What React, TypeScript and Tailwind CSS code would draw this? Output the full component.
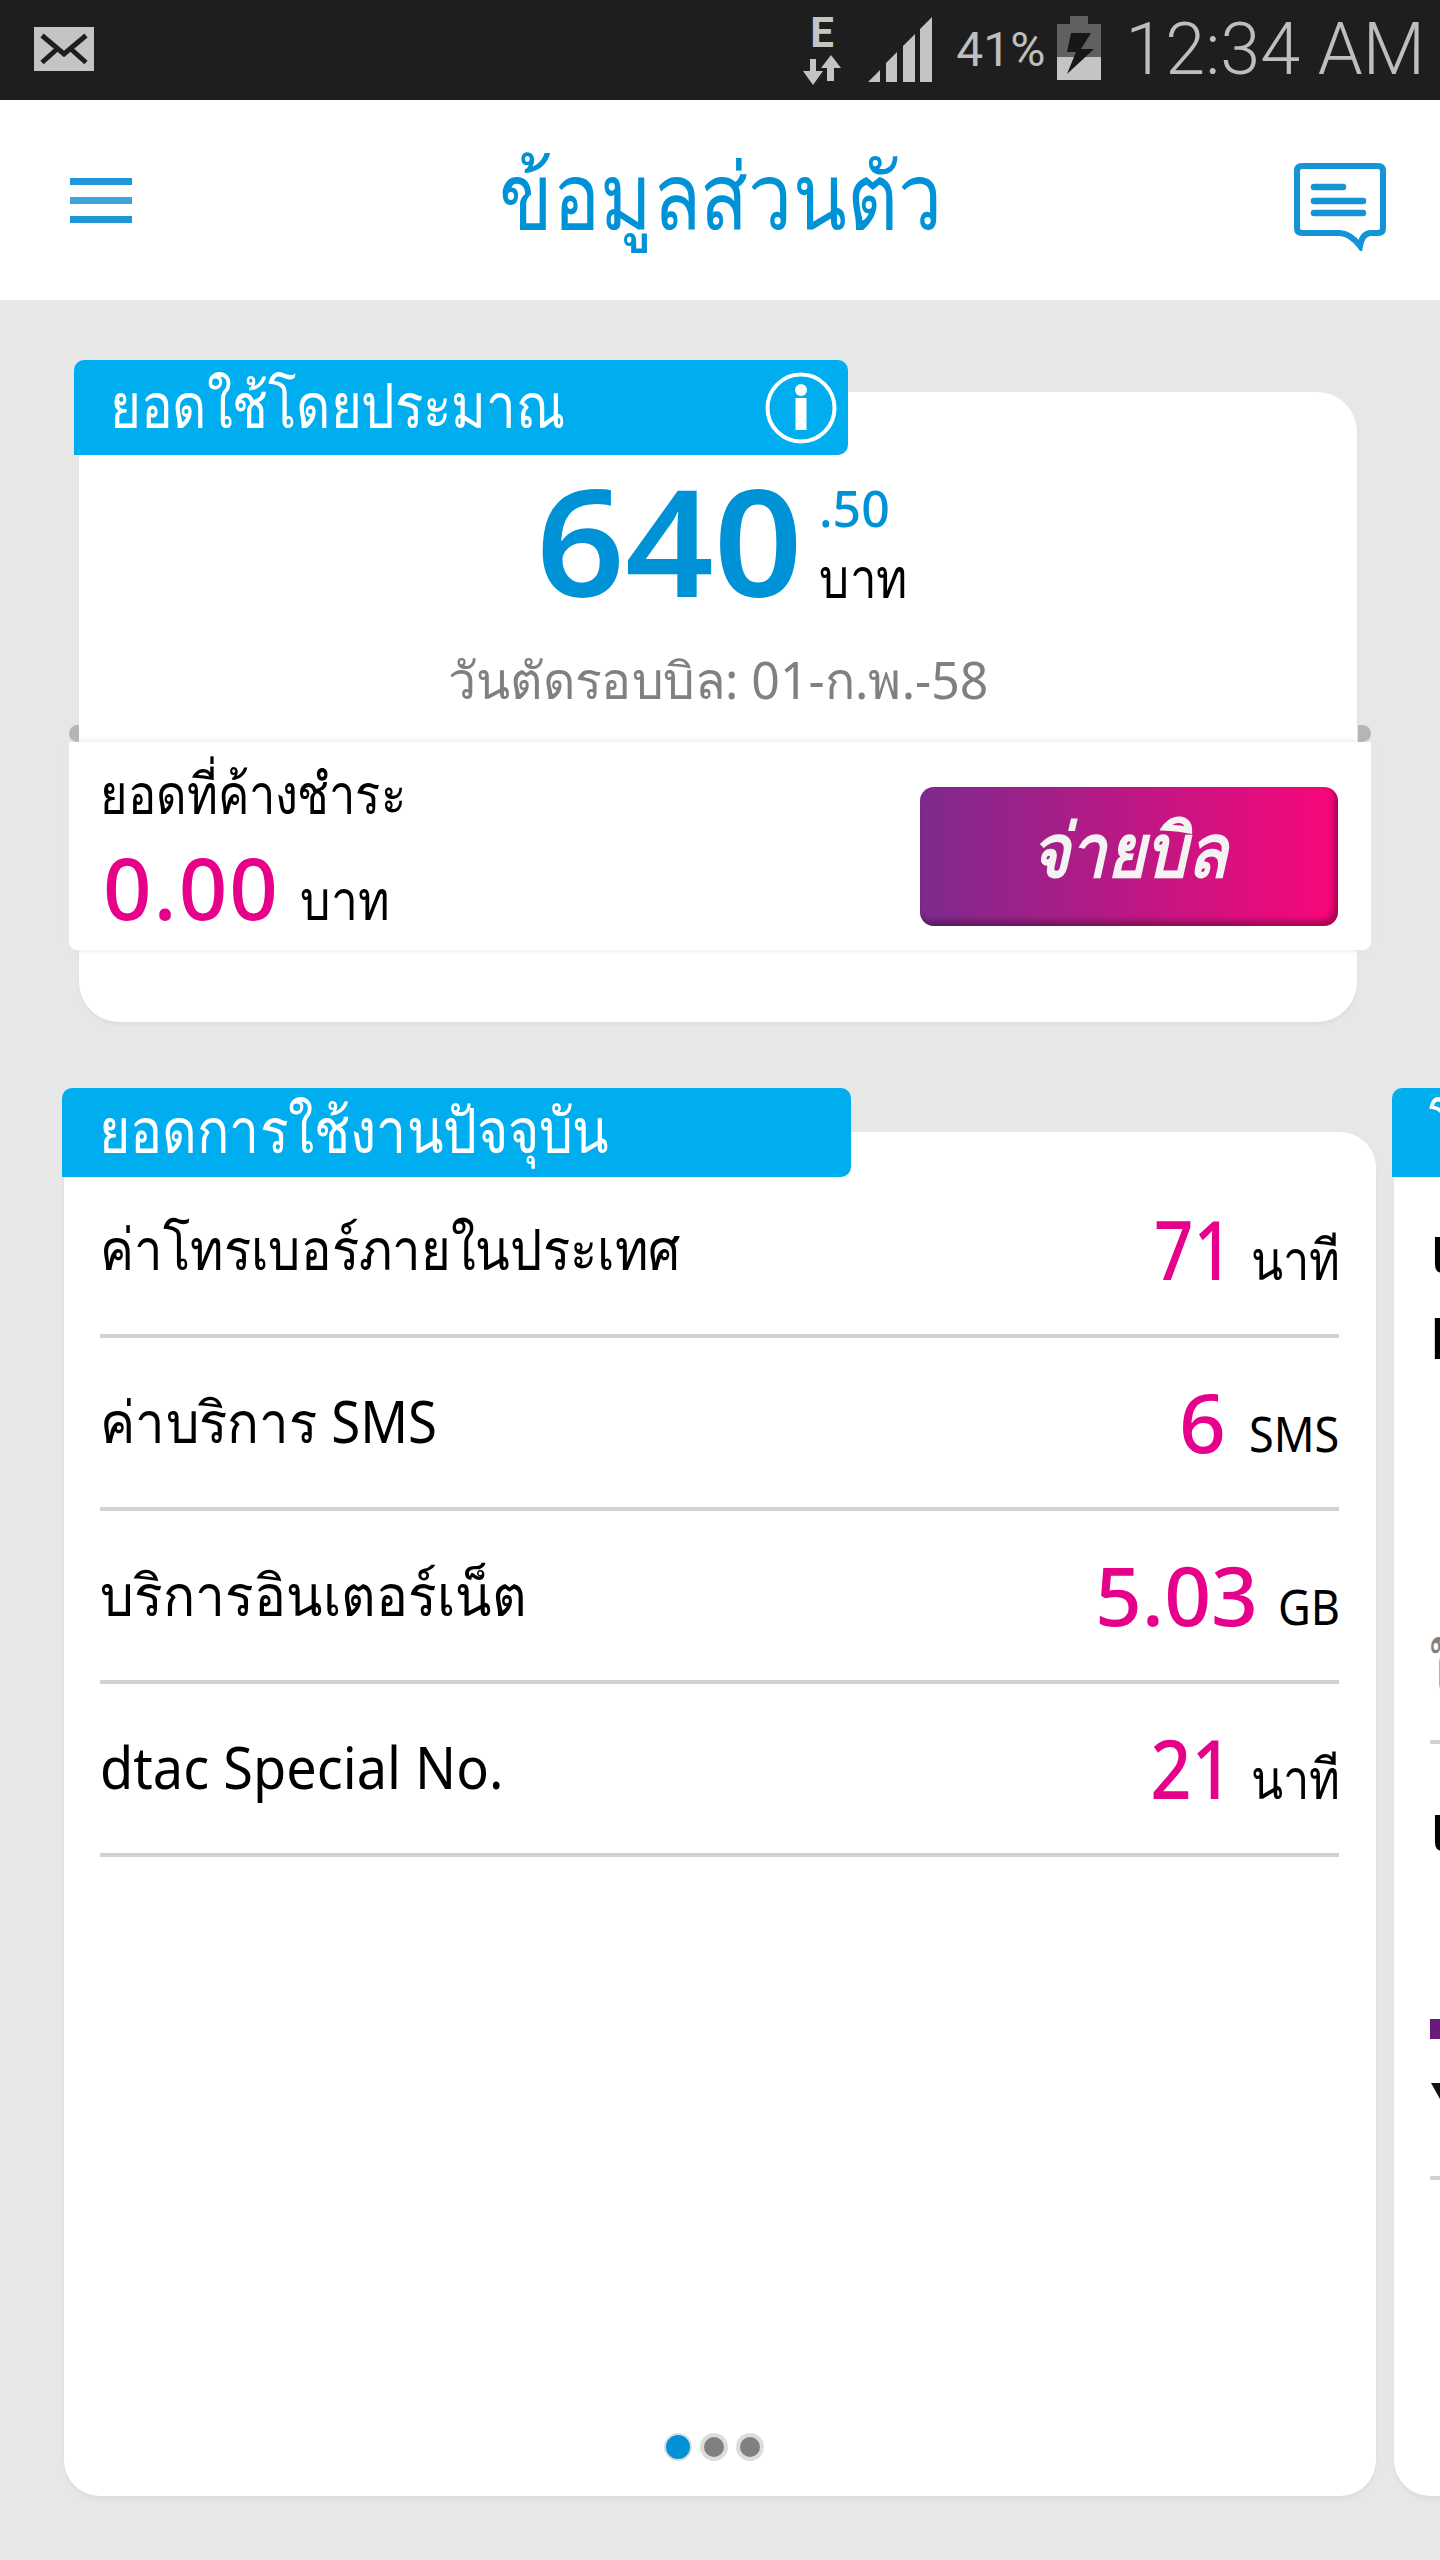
const usageRows = [
  {
    label: 'ค่าโทรเบอร์ภายในประเทศ',
    value: '71',
    unit: 'นาที',
    labelClass: 'scale-x-[0.877]',
    valueClass: 'scale-x-[0.84] mr-[18px]',
    boxClass: 'w-[88px]',
    unitClass: 'mt-[10px] text-[56px] scale-x-[0.84]',
  },
  {
    label: 'ค่าบริการ SMS',
    value: '6',
    unit: 'SMS',
    labelClass: 'scale-x-[0.91]',
    valueClass: 'mr-[23px]',
    boxClass: 'w-[90px]',
    unitClass: 'mt-[12px] text-[50px] scale-x-[0.9]',
  },
  {
    label: 'บริการอินเตอร์เน็ต',
    value: '5.03',
    unit: 'GB',
    labelClass: 'scale-x-[0.92]',
    valueClass: 'mr-[20px]',
    boxClass: 'w-[61px]',
    unitClass: 'mt-[12px] text-[50px] scale-x-[0.9]',
  },
  {
    label: 'dtac Special No.',
    value: '21',
    unit: 'นาที',
    labelClass: 'scale-x-[0.933]',
    valueClass: 'scale-x-[0.88] mr-[18px]',
    boxClass: 'w-[88px]',
    unitClass: 'mt-[10px] text-[56px] scale-x-[0.84]',
  },
];

function StatusBar() {
  return (
    <div className="flex h-[100px] items-center bg-[#1e1e1e] pr-[15px] pl-[34px] font-['Roboto',sans-serif] text-[#bebebe]">
      <svg width="60" height="44" viewBox="0 0 60 44" className="mb-0.5">
        <rect width="60" height="44" fill="#c4c4c4" />
        <path d="M8 8.500 L30 27 L52 8.500 M8 35.500 L22 23 M52 35.500 L38 23" fill="none" stroke="#1e1e1e" strokeWidth="5" />
      </svg>
      <div className="ml-auto flex items-center">
        <div className="flex w-[40px] flex-col items-center pb-[3px]">
          <span className="text-[42px] leading-[34px] font-bold text-[#c4c4c4]">E</span>
          <svg width="38" height="30" viewBox="0 0 38 30" className="mt-[5px] mb-[-4px]">
            <path d="M7 4 H13 V16 H20 L10 30 L0 16 H7Z" fill="#c4c4c4" />
            <path d="M28 0 L38 13 H31 V26 H24 V13 H18Z" fill="#c4c4c4" />
          </svg>
        </div>
        <svg width="64" height="65" viewBox="0 0 64 65" className="mb-0.5 ml-[26px]">
          <path d="M0 65 L12 53 V65Z M18 65 V46 L29 35 V65Z M35 65 V29 L47 17 V65Z M52 65 V12 L64 0 V65Z" fill="#c4c4c4" />
        </svg>
        <span className="ml-6 text-[48px] leading-[60px]">41%</span>
        <svg width="44" height="64" viewBox="0 0 44 64" className="mb-1 ml-3">
          <path d="M13 0 H31 V8 H44 V41 H0 V8 H13Z" fill="#606060" />
          <path d="M0 41 H44 V64 H0Z" fill="#c4c4c4" />
          <path d="M14 17 H34 L24 33 H37 L10 58 L19 36 H10Z" fill="#171717" />
        </svg>
        <span className="ml-6 text-[72px] leading-[96px] font-light">12:34 AM</span>
      </div>
    </div>
  );
}

function Header() {
  return (
    <header className="flex h-[200px] items-center justify-between bg-white pr-[54px] pl-[70px]">
      <div className="flex w-[62px] flex-col gap-3">
        <div className="h-[7px] bg-[#1f97d6]" />
        <div className="h-[7px] bg-[#3da3da]" />
        <div className="h-[7px] bg-[#1f97d6]" />
      </div>
      <h1 className="mb-[12px] ml-[15px] scale-x-[0.856] text-[92px] leading-[120px] text-[#0092d6]">ข้อมูลส่วนตัว</h1>
      <svg width="92" height="88" viewBox="0 0 92 88" className="mt-[13px]" fill="none" stroke="#1494d4" strokeLinecap="round">
        <path d="M8 3 H84 Q89 3 89 8 V65 Q89 70 84 70 H76 Q68 71 66 83 Q57 71 46 70 H8 Q3 70 3 65 V8 Q3 3 8 3Z" strokeWidth="6" />
        <path d="M20 24 H49 M20 38 H69 M20 50 H69" strokeWidth="6.500" />
      </svg>
    </header>
  );
}

function BalanceCard() {
  return (
    <section className="pt-[60px]">
      <div className="relative z-10 ml-[74px] flex h-[95px] w-[774px] items-center justify-between rounded-t-[10px] rounded-br-[10px] bg-[#00aeef] pr-[11px] pl-[36px] text-white">
        <h2 className="mb-[7px] origin-left scale-x-[0.855] text-[62px] leading-[88px] whitespace-nowrap">ยอดใช้โดยประมาณ</h2>
        <svg width="72" height="72" viewBox="0 0 72 72" fill="none" stroke="white">
          <circle cx="36" cy="36" r="33.5" strokeWidth="4" />
          <circle cx="36" cy="18" r="6" fill="white" stroke="none" />
          <path d="M36 26 V58" strokeWidth="11" />
        </svg>
      </div>
      <div className="-mt-[63px] ml-[79px] h-[630px] w-[1278px] rounded-[40px] bg-white shadow-[0_3px_3px_#dedede]">
        <div className="flex h-[224px] pt-[74px] pl-[457px]">
          <span className="w-[283px] origin-left scale-x-[1.05] text-[148px] leading-[148px] font-semibold text-[#0092d6]">640</span>
          <div>
            <div className="mt-3 text-[50px] leading-[60px] font-medium text-[#0092d6]">.50</div>
            <div className="mt-[3px] origin-left scale-x-[0.85] text-[56px] leading-[70px]">บาท</div>
          </div>
        </div>
        <div className="scale-x-[0.98] pt-[23px] text-center text-[51px] leading-[80px] text-[#808080]">วันตัดรอบบิล: 01-ก.พ.-58</div>
      </div>
      <div className="relative -mt-[280px] ml-[69px] flex h-[208px] w-[1302px] justify-between rounded-b-lg bg-white pr-[33px] pl-[31px] shadow-[0_0_6px_#e4e4e4]">
        {/* folded ends of the ribbon */}
        <span className="absolute -top-[17px] left-0 h-[17px] w-[10px] rounded-l-full bg-[#b5b5b5]" />
        <span className="absolute -top-[17px] right-0 h-[17px] w-[13px] rounded-r-full bg-[#b5b5b5]" />
        <div>
          <div className="origin-left scale-x-[0.84] pt-[15px] text-[56px] leading-[70px]">ยอดที่ค้างชำระ</div>
          <div className="mt-[15px] flex items-baseline pl-[3px]">
            <span className="text-[85px] leading-[90px] font-medium tracking-[2px] text-[#e6008a]">0.00</span>
            <span className="ml-[20px] origin-left scale-x-[0.86] text-[56px] leading-[60px]">บาท</span>
          </div>
        </div>
        <button className="mt-[45px] h-[139px] w-[418px] rounded-[14px] bg-linear-to-r/srgb from-[#7d2a8e] to-[#fa067a] pb-[15px] shadow-[inset_-4px_-5px_6px_#00000055]">
          <span className="inline-block scale-x-[0.89] text-[74px] leading-[100px] font-semibold text-[#f3f3f3] italic">จ่ายบิล</span>
        </button>
      </div>
    </section>
  );
}

function UsageCard() {
  return (
    <section className="w-[1314px] shrink-0">
      <h2 className="relative z-10 h-[89px] w-[789px] rounded-t-[10px] rounded-br-[10px] bg-[#00aeef] pl-[37px] text-[62px] leading-[82px] text-white">
        <span className="inline-block origin-left scale-x-[0.864] whitespace-nowrap">ยอดการใช้งานปัจจุบัน</span>
      </h2>
      <div className="-mt-[45px] ml-0.5 flex h-[1364px] w-[1312px] flex-col rounded-[36px] bg-white pt-[33px] pr-[37px] pl-9 shadow-[0_4px_3px_#dedede]">
        {usageRows.map((row) => (
          <div key={row.label} className="flex h-[173px] items-start border-b-4 border-[#d2d2d2] pt-[43px] whitespace-nowrap">
            <span className={`origin-left text-[58px] leading-[80px] ${row.labelClass}`}>{row.label}</span>
            <span className={`ml-auto origin-right text-[82px] leading-[80px] font-medium text-[#e6008a] ${row.valueClass}`}>{row.value}</span>
            <div className={row.boxClass}>
              <span className={`inline-block origin-left leading-[80px] ${row.unitClass}`}>{row.unit}</span>
            </div>
          </div>
        ))}
        <div className="mt-auto mb-[35px] flex justify-center gap-2 pr-[11px]">
          <span className="size-7 rounded-full border-2 border-[#dddddd] bg-[#0092d6]" />
          <span className="size-7 rounded-full border-4 border-[#dddddd] bg-[#808080]" />
          <span className="size-7 rounded-full border-4 border-[#dddddd] bg-[#808080]" />
        </div>
      </div>
    </section>
  );
}

// next slide of the carousel, cut off by the screen edge
function PromotionCard() {
  return (
    <section className="ml-[16px] w-[1314px] shrink-0">
      <h2 className="relative z-10 h-[89px] w-[789px] rounded-t-[10px] rounded-br-[10px] bg-[#00aeef] pl-[37px] text-[62px] leading-[82px] text-white">
        <span className="inline-block origin-left scale-x-[0.7]">โ</span>
      </h2>
      <div className="-mt-[45px] ml-0.5 h-[1364px] w-[1312px] rounded-[36px] bg-white pt-[67px] pl-9 shadow-[0_4px_3px_#dedede]">
        <div className="pl-px text-[60px] leading-[100px] font-bold">เ</div>
        <div className="-mt-[12px] text-[57px] leading-[100px] font-bold">D</div>
        <div className="mt-[245px] h-[112px] border-b-4 border-[#d2d2d2] text-[60px] leading-[72px] text-[#808080]">
          <span className="inline-block origin-left scale-x-[0.6]">ใ</span>
        </div>
        <div className="mt-[43px] pl-px text-[60px] leading-[80px] font-bold">เ</div>
        <div className="mt-[152px] h-5 bg-[#6a1a7a]" />
        <svg width="36" height="32" viewBox="0 0 36 32" className="mt-[44px] ml-px">
          <path d="M0 0 H36 L18 32Z" fill="#111111" />
        </svg>
        <div className="mt-[61px] h-1 bg-[#d2d2d2]" />
      </div>
    </section>
  );
}

export default function App() {
  return (
    <div className="h-[2560px] w-[1440px] overflow-hidden bg-[#e7e7e7] font-['Noto_Sans',sans-serif] text-black">
      <StatusBar />
      <Header />
      <main>
        <BalanceCard />
        <div className="mt-[138px] flex h-[1472px] overflow-hidden pl-[62px]">
          <UsageCard />
          <PromotionCard />
        </div>
      </main>
    </div>
  );
}
